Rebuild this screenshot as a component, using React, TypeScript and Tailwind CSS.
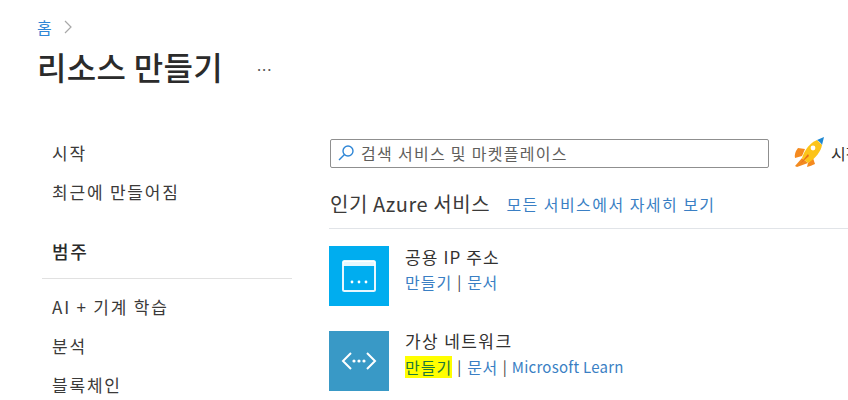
const font = { fontFamily: '"Noto Sans CJK KR", "Open Sans", sans-serif' };

function Rocket() {
  return (
    <svg width="32" height="32" viewBox="0 0 32 32" className="shrink-0">
      <path d="M11 12 L4 11 Q0 16 1 21 L8 19 Z" fill="#f58a1f" />
      <path d="M19 21 L21 27 Q17 29 13 30 L14 26 Z" fill="#f58a1f" />
      <path d="M8 21 L14 26 L3 30 L1 29 Z" fill="#f28a20" />
      <path d="M23 3 C16 6 11 12 8 21 L14 26 C22 21 27 14 28 8 Z" fill="#fcc419" />
      <path d="M23 3 L30 0 L28 8 C27 6 25 4 23 3 Z" fill="#1e88d2" />
      <circle cx="19" cy="11" r="2.4" fill="#fff" />
      <path d="M6 27 L14 17 L15 19 Z" fill="#e8701a" />
    </svg>
  );
}

function Links({ highlight, learn }: { highlight?: boolean; learn?: boolean }) {
  return (
    <div className="flex items-center text-[16px] leading-[22px] text-[#3a7fc4] whitespace-nowrap">
      <span className={highlight ? "bg-[#ffff00] text-[#1f7a3a] tracking-[1px]" : "tracking-[1px]"}>만들기</span>
      <span className="ml-[5px] mr-[6px] text-[#444] text-[15px]">|</span>
      <span className="tracking-[0.5px]">문서</span>
      {learn && (
        <>
          <span className="ml-[5px] mr-[5px] text-[#444] text-[15px]">|</span>
          <span className="text-[15px] tracking-[0.25px]">Microsoft Learn</span>
        </>
      )}
    </div>
  );
}

export default function App() {
  return (
    <div style={font} className="w-[848px] h-[400px] overflow-hidden bg-white text-[#323130] pl-[37px] pt-[14px]">
      <div className="flex items-center h-[26px] gap-[11px] text-[16px] text-[#2f86d6]">
        <span>홈</span>
        <svg width="10" height="16" viewBox="0 0 10 16" fill="none" stroke="#a8a8a8" strokeWidth="1.2">
          <path d="M2 2 L8 8 L2 14" />
        </svg>
      </div>
      <div className="flex items-center h-[52px]">
        <span className="text-[32px] tracking-[0.3px] font-medium text-[#2b2b2b] whitespace-nowrap">리소스 만들기</span>
        <span className="ml-[34px] mb-[2px] text-[15px] text-[#555] tracking-[1px]">...</span>
      </div>
      <div className="flex mt-[42px]">
        <nav className="w-[250px] ml-[5px] mr-[5px] shrink-0 text-[17px] tracking-[1.8px] text-[#3b3a39]">
          <div className="pl-[10px] h-[38px] flex items-center">시작</div>
          <div className="pl-[10px] h-[39px] flex items-center whitespace-nowrap">최근에 만들어짐</div>
          <div className="pl-[10px] mt-[21px] h-[38px] flex items-center font-medium text-[18px] text-[#2b2b2b] border-b border-[#e1e1e1] pb-[8px] box-content">범주</div>
          <div className="pl-[10px] mt-[9px] h-[38px] flex items-center">AI + 기계 학습</div>
          <div className="pl-[10px] h-[39px] flex items-center">분석</div>
          <div className="pl-[10px] h-[39px] flex items-center">블록체인</div>
        </nav>
        <main className="ml-[32px] flex-1 min-w-0">
          <div className="flex items-center h-[38px]">
            <div className="w-[439px] shrink-0 ml-[1px] h-[29px] border border-[#8f8f8f] rounded-[2px] flex items-center pl-[6px] gap-[6px] text-[16px] tracking-[1.3px] text-[#605e5c]">
              <svg width="18" height="18" viewBox="0 0 18 18" fill="none" stroke="#2f86d6" strokeWidth="1.4" className="shrink-0">
                <circle cx="11" cy="7" r="5" />
                <path d="M7.5 10.5 L2 16" />
              </svg>
              <span className="whitespace-nowrap">검색 서비스 및 마켓플레이스</span>
            </div>
            <div className="ml-[25px] shrink-0"><Rocket /></div>
            <span className="ml-[5px] text-[16px] whitespace-nowrap">시작</span>
          </div>
          <div className="flex items-center h-[51px] pt-[2px] mt-[6px] border-b border-[#e1e4e8]">
            <span className="ml-[1px] text-[20px] tracking-[0.6px] text-[#3b3a39] whitespace-nowrap">인기 Azure 서비스</span>
            <span className="ml-[16px] text-[16px] tracking-[1.45px] text-[#3a7fc4] whitespace-nowrap">모든 서비스에서 자세히 보기</span>
          </div>
          <div className="flex mt-[17px] h-[60px]">
            <div className="w-[60px] h-[60px] shrink-0 bg-[#00adef] flex items-center justify-center">
              <svg width="34" height="32" viewBox="0 0 34 32" fill="none">
                <rect x="1" y="1" width="32" height="30" rx="1.5" stroke="#fff" strokeOpacity="0.9" strokeWidth="2" />
                <rect x="1" y="1" width="32" height="5" fill="#fff" fillOpacity="0.9" />
                <circle cx="10" cy="22" r="1.4" fill="#fff" />
                <circle cx="17" cy="22" r="1.4" fill="#fff" />
                <circle cx="24" cy="22" r="1.4" fill="#fff" />
              </svg>
            </div>
            <div className="ml-[16px]">
              <div className="text-[17px] tracking-[1.1px] leading-[24px] text-[#323130] mt-[-1px] whitespace-nowrap">공용 IP 주소</div>
              <div className="mt-[2px]"><Links /></div>
            </div>
          </div>
          <div className="flex mt-[25px] h-[60px]">
            <div className="w-[60px] h-[60px] shrink-0 bg-[#3999c6] flex items-center justify-center">
              <svg width="36" height="20" viewBox="0 0 36 20" fill="none" stroke="#fff" strokeWidth="2">
                <path d="M10 2 L2 10 L10 18" />
                <path d="M26 2 L34 10 L26 18" />
                <circle cx="13" cy="10" r="1.6" fill="#fff" stroke="none" />
                <circle cx="18" cy="10" r="1.6" fill="#fff" stroke="none" />
                <circle cx="23" cy="10" r="1.6" fill="#fff" stroke="none" />
              </svg>
            </div>
            <div className="ml-[16px]">
              <div className="text-[17px] tracking-[1.4px] leading-[24px] text-[#323130] mt-[-2px] whitespace-nowrap">가상 네트워크</div>
              <div className="mt-[3px]"><Links highlight learn /></div>
            </div>
          </div>
        </main>
      </div>
    </div>
  );
}
